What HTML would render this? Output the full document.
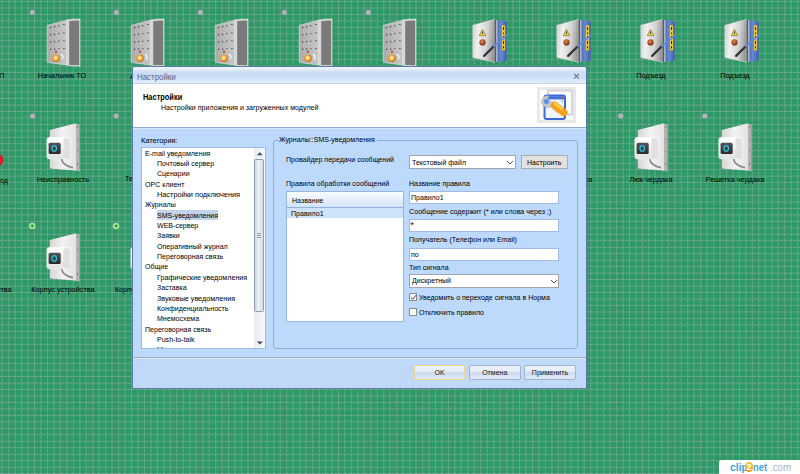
<!DOCTYPE html>
<html><head><meta charset="utf-8">
<style>
html,body{margin:0;padding:0;width:800px;height:474px;overflow:hidden;background:#2d9966;}
body{position:relative;font-family:"Liberation Sans",sans-serif;}
.a{position:absolute;}
.t{position:absolute;font-size:7.05px;line-height:10px;white-space:nowrap;color:#111;}
</style></head><body>
<svg class="a" style="left:0;top:0" width="800" height="474"><g stroke="#c4b8c0" stroke-opacity="0.7" stroke-width="1" stroke-dasharray="0.6467 0.6467"><line x1="2.20" y1="0" x2="2.20" y2="474"/><line x1="8.67" y1="0" x2="8.67" y2="474"/><line x1="15.13" y1="0" x2="15.13" y2="474"/><line x1="21.60" y1="0" x2="21.60" y2="474"/><line x1="28.07" y1="0" x2="28.07" y2="474"/><line x1="34.53" y1="0" x2="34.53" y2="474"/><line x1="41.00" y1="0" x2="41.00" y2="474"/><line x1="47.47" y1="0" x2="47.47" y2="474"/><line x1="53.94" y1="0" x2="53.94" y2="474"/><line x1="60.40" y1="0" x2="60.40" y2="474"/><line x1="66.87" y1="0" x2="66.87" y2="474"/><line x1="73.34" y1="0" x2="73.34" y2="474"/><line x1="79.80" y1="0" x2="79.80" y2="474"/><line x1="86.27" y1="0" x2="86.27" y2="474"/><line x1="92.74" y1="0" x2="92.74" y2="474"/><line x1="99.20" y1="0" x2="99.20" y2="474"/><line x1="105.67" y1="0" x2="105.67" y2="474"/><line x1="112.14" y1="0" x2="112.14" y2="474"/><line x1="118.61" y1="0" x2="118.61" y2="474"/><line x1="125.07" y1="0" x2="125.07" y2="474"/><line x1="131.54" y1="0" x2="131.54" y2="474"/><line x1="138.01" y1="0" x2="138.01" y2="474"/><line x1="144.47" y1="0" x2="144.47" y2="474"/><line x1="150.94" y1="0" x2="150.94" y2="474"/><line x1="157.41" y1="0" x2="157.41" y2="474"/><line x1="163.88" y1="0" x2="163.88" y2="474"/><line x1="170.34" y1="0" x2="170.34" y2="474"/><line x1="176.81" y1="0" x2="176.81" y2="474"/><line x1="183.28" y1="0" x2="183.28" y2="474"/><line x1="189.74" y1="0" x2="189.74" y2="474"/><line x1="196.21" y1="0" x2="196.21" y2="474"/><line x1="202.68" y1="0" x2="202.68" y2="474"/><line x1="209.14" y1="0" x2="209.14" y2="474"/><line x1="215.61" y1="0" x2="215.61" y2="474"/><line x1="222.08" y1="0" x2="222.08" y2="474"/><line x1="228.55" y1="0" x2="228.55" y2="474"/><line x1="235.01" y1="0" x2="235.01" y2="474"/><line x1="241.48" y1="0" x2="241.48" y2="474"/><line x1="247.95" y1="0" x2="247.95" y2="474"/><line x1="254.41" y1="0" x2="254.41" y2="474"/><line x1="260.88" y1="0" x2="260.88" y2="474"/><line x1="267.35" y1="0" x2="267.35" y2="474"/><line x1="273.81" y1="0" x2="273.81" y2="474"/><line x1="280.28" y1="0" x2="280.28" y2="474"/><line x1="286.75" y1="0" x2="286.75" y2="474"/><line x1="293.22" y1="0" x2="293.22" y2="474"/><line x1="299.68" y1="0" x2="299.68" y2="474"/><line x1="306.15" y1="0" x2="306.15" y2="474"/><line x1="312.62" y1="0" x2="312.62" y2="474"/><line x1="319.08" y1="0" x2="319.08" y2="474"/><line x1="325.55" y1="0" x2="325.55" y2="474"/><line x1="332.02" y1="0" x2="332.02" y2="474"/><line x1="338.48" y1="0" x2="338.48" y2="474"/><line x1="344.95" y1="0" x2="344.95" y2="474"/><line x1="351.42" y1="0" x2="351.42" y2="474"/><line x1="357.88" y1="0" x2="357.88" y2="474"/><line x1="364.35" y1="0" x2="364.35" y2="474"/><line x1="370.82" y1="0" x2="370.82" y2="474"/><line x1="377.29" y1="0" x2="377.29" y2="474"/><line x1="383.75" y1="0" x2="383.75" y2="474"/><line x1="390.22" y1="0" x2="390.22" y2="474"/><line x1="396.69" y1="0" x2="396.69" y2="474"/><line x1="403.15" y1="0" x2="403.15" y2="474"/><line x1="409.62" y1="0" x2="409.62" y2="474"/><line x1="416.09" y1="0" x2="416.09" y2="474"/><line x1="422.55" y1="0" x2="422.55" y2="474"/><line x1="429.02" y1="0" x2="429.02" y2="474"/><line x1="435.49" y1="0" x2="435.49" y2="474"/><line x1="441.96" y1="0" x2="441.96" y2="474"/><line x1="448.42" y1="0" x2="448.42" y2="474"/><line x1="454.89" y1="0" x2="454.89" y2="474"/><line x1="461.36" y1="0" x2="461.36" y2="474"/><line x1="467.82" y1="0" x2="467.82" y2="474"/><line x1="474.29" y1="0" x2="474.29" y2="474"/><line x1="480.76" y1="0" x2="480.76" y2="474"/><line x1="487.22" y1="0" x2="487.22" y2="474"/><line x1="493.69" y1="0" x2="493.69" y2="474"/><line x1="500.16" y1="0" x2="500.16" y2="474"/><line x1="506.63" y1="0" x2="506.63" y2="474"/><line x1="513.09" y1="0" x2="513.09" y2="474"/><line x1="519.56" y1="0" x2="519.56" y2="474"/><line x1="526.03" y1="0" x2="526.03" y2="474"/><line x1="532.49" y1="0" x2="532.49" y2="474"/><line x1="538.96" y1="0" x2="538.96" y2="474"/><line x1="545.43" y1="0" x2="545.43" y2="474"/><line x1="551.89" y1="0" x2="551.89" y2="474"/><line x1="558.36" y1="0" x2="558.36" y2="474"/><line x1="564.83" y1="0" x2="564.83" y2="474"/><line x1="571.30" y1="0" x2="571.30" y2="474"/><line x1="577.76" y1="0" x2="577.76" y2="474"/><line x1="584.23" y1="0" x2="584.23" y2="474"/><line x1="590.70" y1="0" x2="590.70" y2="474"/><line x1="597.16" y1="0" x2="597.16" y2="474"/><line x1="603.63" y1="0" x2="603.63" y2="474"/><line x1="610.10" y1="0" x2="610.10" y2="474"/><line x1="616.56" y1="0" x2="616.56" y2="474"/><line x1="623.03" y1="0" x2="623.03" y2="474"/><line x1="629.50" y1="0" x2="629.50" y2="474"/><line x1="635.97" y1="0" x2="635.97" y2="474"/><line x1="642.43" y1="0" x2="642.43" y2="474"/><line x1="648.90" y1="0" x2="648.90" y2="474"/><line x1="655.37" y1="0" x2="655.37" y2="474"/><line x1="661.83" y1="0" x2="661.83" y2="474"/><line x1="668.30" y1="0" x2="668.30" y2="474"/><line x1="674.77" y1="0" x2="674.77" y2="474"/><line x1="681.23" y1="0" x2="681.23" y2="474"/><line x1="687.70" y1="0" x2="687.70" y2="474"/><line x1="694.17" y1="0" x2="694.17" y2="474"/><line x1="700.64" y1="0" x2="700.64" y2="474"/><line x1="707.10" y1="0" x2="707.10" y2="474"/><line x1="713.57" y1="0" x2="713.57" y2="474"/><line x1="720.04" y1="0" x2="720.04" y2="474"/><line x1="726.50" y1="0" x2="726.50" y2="474"/><line x1="732.97" y1="0" x2="732.97" y2="474"/><line x1="739.44" y1="0" x2="739.44" y2="474"/><line x1="745.90" y1="0" x2="745.90" y2="474"/><line x1="752.37" y1="0" x2="752.37" y2="474"/><line x1="758.84" y1="0" x2="758.84" y2="474"/><line x1="765.31" y1="0" x2="765.31" y2="474"/><line x1="771.77" y1="0" x2="771.77" y2="474"/><line x1="778.24" y1="0" x2="778.24" y2="474"/><line x1="784.71" y1="0" x2="784.71" y2="474"/><line x1="791.17" y1="0" x2="791.17" y2="474"/><line x1="797.64" y1="0" x2="797.64" y2="474"/><line x1="0" y1="1.50" x2="800" y2="1.50"/><line x1="0" y1="7.97" x2="800" y2="7.97"/><line x1="0" y1="14.43" x2="800" y2="14.43"/><line x1="0" y1="20.90" x2="800" y2="20.90"/><line x1="0" y1="27.37" x2="800" y2="27.37"/><line x1="0" y1="33.84" x2="800" y2="33.84"/><line x1="0" y1="40.30" x2="800" y2="40.30"/><line x1="0" y1="46.77" x2="800" y2="46.77"/><line x1="0" y1="53.24" x2="800" y2="53.24"/><line x1="0" y1="59.70" x2="800" y2="59.70"/><line x1="0" y1="66.17" x2="800" y2="66.17"/><line x1="0" y1="72.64" x2="800" y2="72.64"/><line x1="0" y1="79.10" x2="800" y2="79.10"/><line x1="0" y1="85.57" x2="800" y2="85.57"/><line x1="0" y1="92.04" x2="800" y2="92.04"/><line x1="0" y1="98.50" x2="800" y2="98.50"/><line x1="0" y1="104.97" x2="800" y2="104.97"/><line x1="0" y1="111.44" x2="800" y2="111.44"/><line x1="0" y1="117.91" x2="800" y2="117.91"/><line x1="0" y1="124.37" x2="800" y2="124.37"/><line x1="0" y1="130.84" x2="800" y2="130.84"/><line x1="0" y1="137.31" x2="800" y2="137.31"/><line x1="0" y1="143.77" x2="800" y2="143.77"/><line x1="0" y1="150.24" x2="800" y2="150.24"/><line x1="0" y1="156.71" x2="800" y2="156.71"/><line x1="0" y1="163.18" x2="800" y2="163.18"/><line x1="0" y1="169.64" x2="800" y2="169.64"/><line x1="0" y1="176.11" x2="800" y2="176.11"/><line x1="0" y1="182.58" x2="800" y2="182.58"/><line x1="0" y1="189.04" x2="800" y2="189.04"/><line x1="0" y1="195.51" x2="800" y2="195.51"/><line x1="0" y1="201.98" x2="800" y2="201.98"/><line x1="0" y1="208.44" x2="800" y2="208.44"/><line x1="0" y1="214.91" x2="800" y2="214.91"/><line x1="0" y1="221.38" x2="800" y2="221.38"/><line x1="0" y1="227.85" x2="800" y2="227.85"/><line x1="0" y1="234.31" x2="800" y2="234.31"/><line x1="0" y1="240.78" x2="800" y2="240.78"/><line x1="0" y1="247.25" x2="800" y2="247.25"/><line x1="0" y1="253.71" x2="800" y2="253.71"/><line x1="0" y1="260.18" x2="800" y2="260.18"/><line x1="0" y1="266.65" x2="800" y2="266.65"/><line x1="0" y1="273.11" x2="800" y2="273.11"/><line x1="0" y1="279.58" x2="800" y2="279.58"/><line x1="0" y1="286.05" x2="800" y2="286.05"/><line x1="0" y1="292.52" x2="800" y2="292.52"/><line x1="0" y1="298.98" x2="800" y2="298.98"/><line x1="0" y1="305.45" x2="800" y2="305.45"/><line x1="0" y1="311.92" x2="800" y2="311.92"/><line x1="0" y1="318.38" x2="800" y2="318.38"/><line x1="0" y1="324.85" x2="800" y2="324.85"/><line x1="0" y1="331.32" x2="800" y2="331.32"/><line x1="0" y1="337.78" x2="800" y2="337.78"/><line x1="0" y1="344.25" x2="800" y2="344.25"/><line x1="0" y1="350.72" x2="800" y2="350.72"/><line x1="0" y1="357.19" x2="800" y2="357.19"/><line x1="0" y1="363.65" x2="800" y2="363.65"/><line x1="0" y1="370.12" x2="800" y2="370.12"/><line x1="0" y1="376.59" x2="800" y2="376.59"/><line x1="0" y1="383.05" x2="800" y2="383.05"/><line x1="0" y1="389.52" x2="800" y2="389.52"/><line x1="0" y1="395.99" x2="800" y2="395.99"/><line x1="0" y1="402.45" x2="800" y2="402.45"/><line x1="0" y1="408.92" x2="800" y2="408.92"/><line x1="0" y1="415.39" x2="800" y2="415.39"/><line x1="0" y1="421.85" x2="800" y2="421.85"/><line x1="0" y1="428.32" x2="800" y2="428.32"/><line x1="0" y1="434.79" x2="800" y2="434.79"/><line x1="0" y1="441.26" x2="800" y2="441.26"/><line x1="0" y1="447.72" x2="800" y2="447.72"/><line x1="0" y1="454.19" x2="800" y2="454.19"/><line x1="0" y1="460.66" x2="800" y2="460.66"/><line x1="0" y1="467.12" x2="800" y2="467.12"/><line x1="0" y1="473.59" x2="800" y2="473.59"/></g></svg>
<svg class="a" style="left:0;top:0" width="800" height="474"><defs>
<linearGradient id="gA" x1="0" y1="0" x2="1" y2="0"><stop offset="0" stop-color="#aaaaaa"/><stop offset="0.5" stop-color="#bababa"/><stop offset="1" stop-color="#c6c6c6"/></linearGradient>
<radialGradient id="gKnob" cx="0.45" cy="0.45" r="0.6"><stop offset="0" stop-color="#fffbe0"/><stop offset="0.35" stop-color="#f8d070"/><stop offset="0.75" stop-color="#e08a18"/><stop offset="1" stop-color="#9a5010"/></radialGradient>
<linearGradient id="gB" x1="0" y1="0" x2="1" y2="0.15"><stop offset="0" stop-color="#cfcfcf"/><stop offset="0.3" stop-color="#f0f0f0"/><stop offset="0.7" stop-color="#d2d2d2"/><stop offset="1" stop-color="#9a9a9a"/></linearGradient>
<linearGradient id="gBlue" x1="0" y1="0" x2="1" y2="0"><stop offset="0" stop-color="#3a58a8"/><stop offset="0.5" stop-color="#6a8ad0"/><stop offset="1" stop-color="#3e5cac"/></linearGradient>
<radialGradient id="gBtn" cx="0.4" cy="0.35" r="0.7"><stop offset="0" stop-color="#d88a58"/><stop offset="0.6" stop-color="#a84a20"/><stop offset="1" stop-color="#6a2a10"/></radialGradient>
<linearGradient id="gC" x1="0" y1="0" x2="1" y2="0"><stop offset="0" stop-color="#d6d6d6"/><stop offset="0.5" stop-color="#f2f2f2"/><stop offset="1" stop-color="#e4e4e4"/></linearGradient>
<linearGradient id="gMod" x1="0" y1="0" x2="0" y2="1"><stop offset="0" stop-color="#ffffff"/><stop offset="1" stop-color="#e2e2e2"/></linearGradient>
<linearGradient id="gDisp" x1="0" y1="0" x2="0" y2="1"><stop offset="0" stop-color="#555"/><stop offset="1" stop-color="#2a2a2a"/></linearGradient>



</defs><g transform="translate(46,17)">
 <path d="M1.2 8.4L20.8 3.2L20.8 48L2.6 45.6Q1.2 45.4 1.2 44Z" fill="url(#gA)" stroke="#dedede" stroke-width="0.7"/>
 <path d="M20.6 3Q27 1.6 34 2L34 49.2Q27 49.2 20.6 48.2Z" fill="#d6d6d6" stroke="#ececec" stroke-width="0.5"/>
 <path d="M23.2 4.2Q28 3.4 33.2 3.6L33.2 48.3L23.2 47.9Z" fill="#7b7b7b"/>
 <g fill="#444">
  <rect x="4" y="10" width="1.2" height="1.3"/><rect x="8" y="9" width="1.2" height="1.3"/><rect x="12.2" y="8" width="1.2" height="1.2"/><rect x="17.2" y="7" width="1.4" height="1"/>
  <rect x="4" y="17.2" width="1.2" height="1.3"/><rect x="8" y="16.6" width="1.2" height="1.3"/><rect x="12.2" y="16" width="1.2" height="1"/><rect x="17.2" y="15.4" width="1.4" height="1"/>
  <rect x="4" y="24.4" width="1.2" height="1.3"/><rect x="8" y="24" width="1.2" height="1.3"/><rect x="12.2" y="23.6" width="1.2" height="1.2"/><rect x="17.2" y="23.2" width="1.4" height="1"/>
  <rect x="4" y="31.6" width="1.2" height="1.3"/><rect x="8" y="31.4" width="1.2" height="1.3"/><rect x="12.2" y="31.2" width="1.2" height="1"/><rect x="17.2" y="31" width="1.4" height="1"/>
 </g>
 <circle cx="10" cy="34.8" r="1" fill="#b83018"/>
 <circle cx="10" cy="41.2" r="3.7" fill="url(#gKnob)"/>
 <path d="M14.8 37.2Q18 38.8 16.2 42.4" fill="none" stroke="#f6f6f6" stroke-width="1.3"/>
</g><g transform="translate(130,17)">
 <path d="M1.2 8.4L20.8 3.2L20.8 48L2.6 45.6Q1.2 45.4 1.2 44Z" fill="url(#gA)" stroke="#dedede" stroke-width="0.7"/>
 <path d="M20.6 3Q27 1.6 34 2L34 49.2Q27 49.2 20.6 48.2Z" fill="#d6d6d6" stroke="#ececec" stroke-width="0.5"/>
 <path d="M23.2 4.2Q28 3.4 33.2 3.6L33.2 48.3L23.2 47.9Z" fill="#7b7b7b"/>
 <g fill="#444">
  <rect x="4" y="10" width="1.2" height="1.3"/><rect x="8" y="9" width="1.2" height="1.3"/><rect x="12.2" y="8" width="1.2" height="1.2"/><rect x="17.2" y="7" width="1.4" height="1"/>
  <rect x="4" y="17.2" width="1.2" height="1.3"/><rect x="8" y="16.6" width="1.2" height="1.3"/><rect x="12.2" y="16" width="1.2" height="1"/><rect x="17.2" y="15.4" width="1.4" height="1"/>
  <rect x="4" y="24.4" width="1.2" height="1.3"/><rect x="8" y="24" width="1.2" height="1.3"/><rect x="12.2" y="23.6" width="1.2" height="1.2"/><rect x="17.2" y="23.2" width="1.4" height="1"/>
  <rect x="4" y="31.6" width="1.2" height="1.3"/><rect x="8" y="31.4" width="1.2" height="1.3"/><rect x="12.2" y="31.2" width="1.2" height="1"/><rect x="17.2" y="31" width="1.4" height="1"/>
 </g>
 <circle cx="10" cy="34.8" r="1" fill="#b83018"/>
 <circle cx="10" cy="41.2" r="3.7" fill="url(#gKnob)"/>
 <path d="M14.8 37.2Q18 38.8 16.2 42.4" fill="none" stroke="#f6f6f6" stroke-width="1.3"/>
</g><g transform="translate(214,17)">
 <path d="M1.2 8.4L20.8 3.2L20.8 48L2.6 45.6Q1.2 45.4 1.2 44Z" fill="url(#gA)" stroke="#dedede" stroke-width="0.7"/>
 <path d="M20.6 3Q27 1.6 34 2L34 49.2Q27 49.2 20.6 48.2Z" fill="#d6d6d6" stroke="#ececec" stroke-width="0.5"/>
 <path d="M23.2 4.2Q28 3.4 33.2 3.6L33.2 48.3L23.2 47.9Z" fill="#7b7b7b"/>
 <g fill="#444">
  <rect x="4" y="10" width="1.2" height="1.3"/><rect x="8" y="9" width="1.2" height="1.3"/><rect x="12.2" y="8" width="1.2" height="1.2"/><rect x="17.2" y="7" width="1.4" height="1"/>
  <rect x="4" y="17.2" width="1.2" height="1.3"/><rect x="8" y="16.6" width="1.2" height="1.3"/><rect x="12.2" y="16" width="1.2" height="1"/><rect x="17.2" y="15.4" width="1.4" height="1"/>
  <rect x="4" y="24.4" width="1.2" height="1.3"/><rect x="8" y="24" width="1.2" height="1.3"/><rect x="12.2" y="23.6" width="1.2" height="1.2"/><rect x="17.2" y="23.2" width="1.4" height="1"/>
  <rect x="4" y="31.6" width="1.2" height="1.3"/><rect x="8" y="31.4" width="1.2" height="1.3"/><rect x="12.2" y="31.2" width="1.2" height="1"/><rect x="17.2" y="31" width="1.4" height="1"/>
 </g>
 <circle cx="10" cy="34.8" r="1" fill="#b83018"/>
 <circle cx="10" cy="41.2" r="3.7" fill="url(#gKnob)"/>
 <path d="M14.8 37.2Q18 38.8 16.2 42.4" fill="none" stroke="#f6f6f6" stroke-width="1.3"/>
</g><g transform="translate(298,17)">
 <path d="M1.2 8.4L20.8 3.2L20.8 48L2.6 45.6Q1.2 45.4 1.2 44Z" fill="url(#gA)" stroke="#dedede" stroke-width="0.7"/>
 <path d="M20.6 3Q27 1.6 34 2L34 49.2Q27 49.2 20.6 48.2Z" fill="#d6d6d6" stroke="#ececec" stroke-width="0.5"/>
 <path d="M23.2 4.2Q28 3.4 33.2 3.6L33.2 48.3L23.2 47.9Z" fill="#7b7b7b"/>
 <g fill="#444">
  <rect x="4" y="10" width="1.2" height="1.3"/><rect x="8" y="9" width="1.2" height="1.3"/><rect x="12.2" y="8" width="1.2" height="1.2"/><rect x="17.2" y="7" width="1.4" height="1"/>
  <rect x="4" y="17.2" width="1.2" height="1.3"/><rect x="8" y="16.6" width="1.2" height="1.3"/><rect x="12.2" y="16" width="1.2" height="1"/><rect x="17.2" y="15.4" width="1.4" height="1"/>
  <rect x="4" y="24.4" width="1.2" height="1.3"/><rect x="8" y="24" width="1.2" height="1.3"/><rect x="12.2" y="23.6" width="1.2" height="1.2"/><rect x="17.2" y="23.2" width="1.4" height="1"/>
  <rect x="4" y="31.6" width="1.2" height="1.3"/><rect x="8" y="31.4" width="1.2" height="1.3"/><rect x="12.2" y="31.2" width="1.2" height="1"/><rect x="17.2" y="31" width="1.4" height="1"/>
 </g>
 <circle cx="10" cy="34.8" r="1" fill="#b83018"/>
 <circle cx="10" cy="41.2" r="3.7" fill="url(#gKnob)"/>
 <path d="M14.8 37.2Q18 38.8 16.2 42.4" fill="none" stroke="#f6f6f6" stroke-width="1.3"/>
</g><g transform="translate(382,17)">
 <path d="M1.2 8.4L20.8 3.2L20.8 48L2.6 45.6Q1.2 45.4 1.2 44Z" fill="url(#gA)" stroke="#dedede" stroke-width="0.7"/>
 <path d="M20.6 3Q27 1.6 34 2L34 49.2Q27 49.2 20.6 48.2Z" fill="#d6d6d6" stroke="#ececec" stroke-width="0.5"/>
 <path d="M23.2 4.2Q28 3.4 33.2 3.6L33.2 48.3L23.2 47.9Z" fill="#7b7b7b"/>
 <g fill="#444">
  <rect x="4" y="10" width="1.2" height="1.3"/><rect x="8" y="9" width="1.2" height="1.3"/><rect x="12.2" y="8" width="1.2" height="1.2"/><rect x="17.2" y="7" width="1.4" height="1"/>
  <rect x="4" y="17.2" width="1.2" height="1.3"/><rect x="8" y="16.6" width="1.2" height="1.3"/><rect x="12.2" y="16" width="1.2" height="1"/><rect x="17.2" y="15.4" width="1.4" height="1"/>
  <rect x="4" y="24.4" width="1.2" height="1.3"/><rect x="8" y="24" width="1.2" height="1.3"/><rect x="12.2" y="23.6" width="1.2" height="1.2"/><rect x="17.2" y="23.2" width="1.4" height="1"/>
  <rect x="4" y="31.6" width="1.2" height="1.3"/><rect x="8" y="31.4" width="1.2" height="1.3"/><rect x="12.2" y="31.2" width="1.2" height="1"/><rect x="17.2" y="31" width="1.4" height="1"/>
 </g>
 <circle cx="10" cy="34.8" r="1" fill="#b83018"/>
 <circle cx="10" cy="41.2" r="3.7" fill="url(#gKnob)"/>
 <path d="M14.8 37.2Q18 38.8 16.2 42.4" fill="none" stroke="#f6f6f6" stroke-width="1.3"/>
</g><g transform="translate(471,17)">
 <path d="M1.8 8.2L23.9 2.3L23.9 45.3L1.8 40.5Z" fill="url(#gB)" stroke="#e6e6e6" stroke-width="0.5"/>
 <path d="M24.2 2.4L35.7 4.5L35.7 43.5L24.2 45.3Z" fill="url(#gBlue)"/>
 <rect x="23.6" y="2.6" width="1.4" height="42.6" fill="#5a5a5a"/>
 <rect x="25" y="3" width="1.6" height="42" fill="#aab4c8"/>
 <rect x="30.9" y="8.2" width="3.2" height="25.3" rx="0.8" fill="#e6c63a"/>
 <g fill="#2a2a2a"><rect x="32" y="10" width="1" height="3"/><rect x="32" y="15.5" width="1" height="1.6"/><rect x="32" y="19" width="1" height="1.2"/><rect x="32" y="24" width="1" height="3"/><rect x="32" y="29" width="1" height="2.5"/></g>
 <path d="M11.5 12.5L14.9 18.7L8.1 18.7Z" fill="#f0d040" stroke="#6a5a20" stroke-width="0.55"/>
 <rect x="11.1" y="14.6" width="0.8" height="2.4" fill="#333"/>
 <circle cx="11.5" cy="25.4" r="3.1" fill="url(#gBtn)"/>
 <path d="M13.1 38.9L22.8 29.2" stroke="#303438" stroke-width="2.3" stroke-linecap="round"/>
 <path d="M22.8 29.2L35.7 18.4" stroke="#5c8ae0" stroke-width="1.9" stroke-linecap="round"/>
</g><g transform="translate(555,17)">
 <path d="M1.8 8.2L23.9 2.3L23.9 45.3L1.8 40.5Z" fill="url(#gB)" stroke="#e6e6e6" stroke-width="0.5"/>
 <path d="M24.2 2.4L35.7 4.5L35.7 43.5L24.2 45.3Z" fill="url(#gBlue)"/>
 <rect x="23.6" y="2.6" width="1.4" height="42.6" fill="#5a5a5a"/>
 <rect x="25" y="3" width="1.6" height="42" fill="#aab4c8"/>
 <rect x="30.9" y="8.2" width="3.2" height="25.3" rx="0.8" fill="#e6c63a"/>
 <g fill="#2a2a2a"><rect x="32" y="10" width="1" height="3"/><rect x="32" y="15.5" width="1" height="1.6"/><rect x="32" y="19" width="1" height="1.2"/><rect x="32" y="24" width="1" height="3"/><rect x="32" y="29" width="1" height="2.5"/></g>
 <path d="M11.5 12.5L14.9 18.7L8.1 18.7Z" fill="#f0d040" stroke="#6a5a20" stroke-width="0.55"/>
 <rect x="11.1" y="14.6" width="0.8" height="2.4" fill="#333"/>
 <circle cx="11.5" cy="25.4" r="3.1" fill="url(#gBtn)"/>
 <path d="M13.1 38.9L22.8 29.2" stroke="#303438" stroke-width="2.3" stroke-linecap="round"/>
 <path d="M22.8 29.2L35.7 18.4" stroke="#5c8ae0" stroke-width="1.9" stroke-linecap="round"/>
</g><g transform="translate(639,17)">
 <path d="M1.8 8.2L23.9 2.3L23.9 45.3L1.8 40.5Z" fill="url(#gB)" stroke="#e6e6e6" stroke-width="0.5"/>
 <path d="M24.2 2.4L35.7 4.5L35.7 43.5L24.2 45.3Z" fill="url(#gBlue)"/>
 <rect x="23.6" y="2.6" width="1.4" height="42.6" fill="#5a5a5a"/>
 <rect x="25" y="3" width="1.6" height="42" fill="#aab4c8"/>
 <rect x="30.9" y="8.2" width="3.2" height="25.3" rx="0.8" fill="#e6c63a"/>
 <g fill="#2a2a2a"><rect x="32" y="10" width="1" height="3"/><rect x="32" y="15.5" width="1" height="1.6"/><rect x="32" y="19" width="1" height="1.2"/><rect x="32" y="24" width="1" height="3"/><rect x="32" y="29" width="1" height="2.5"/></g>
 <path d="M11.5 12.5L14.9 18.7L8.1 18.7Z" fill="#f0d040" stroke="#6a5a20" stroke-width="0.55"/>
 <rect x="11.1" y="14.6" width="0.8" height="2.4" fill="#333"/>
 <circle cx="11.5" cy="25.4" r="3.1" fill="url(#gBtn)"/>
 <path d="M13.1 38.9L22.8 29.2" stroke="#303438" stroke-width="2.3" stroke-linecap="round"/>
 <path d="M22.8 29.2L35.7 18.4" stroke="#5c8ae0" stroke-width="1.9" stroke-linecap="round"/>
</g><g transform="translate(723,17)">
 <path d="M1.8 8.2L23.9 2.3L23.9 45.3L1.8 40.5Z" fill="url(#gB)" stroke="#e6e6e6" stroke-width="0.5"/>
 <path d="M24.2 2.4L35.7 4.5L35.7 43.5L24.2 45.3Z" fill="url(#gBlue)"/>
 <rect x="23.6" y="2.6" width="1.4" height="42.6" fill="#5a5a5a"/>
 <rect x="25" y="3" width="1.6" height="42" fill="#aab4c8"/>
 <rect x="30.9" y="8.2" width="3.2" height="25.3" rx="0.8" fill="#e6c63a"/>
 <g fill="#2a2a2a"><rect x="32" y="10" width="1" height="3"/><rect x="32" y="15.5" width="1" height="1.6"/><rect x="32" y="19" width="1" height="1.2"/><rect x="32" y="24" width="1" height="3"/><rect x="32" y="29" width="1" height="2.5"/></g>
 <path d="M11.5 12.5L14.9 18.7L8.1 18.7Z" fill="#f0d040" stroke="#6a5a20" stroke-width="0.55"/>
 <rect x="11.1" y="14.6" width="0.8" height="2.4" fill="#333"/>
 <circle cx="11.5" cy="25.4" r="3.1" fill="url(#gBtn)"/>
 <path d="M13.1 38.9L22.8 29.2" stroke="#303438" stroke-width="2.3" stroke-linecap="round"/>
 <path d="M22.8 29.2L35.7 18.4" stroke="#5c8ae0" stroke-width="1.9" stroke-linecap="round"/>
</g><g transform="translate(46,121)">
 <path d="M3.8 9L29.1 2.4L29.1 49.5L3.8 47.5Z" fill="url(#gC)"/>
 <path d="M29.1 2.4L33.6 3.4L33.6 50.6L29.1 49.5Z" fill="#b2b2b2"/><rect x="29" y="2.6" width="1.1" height="47" fill="#e2e2e2"/>
 <g fill="#606060"><circle cx="31.6" cy="6" r="0.65"/><circle cx="31.6" cy="18" r="0.55"/><circle cx="31.6" cy="30" r="0.55"/><circle cx="31.6" cy="43" r="0.65"/></g>
 <rect x="0.8" y="16.3" width="24.1" height="21.6" rx="2.5" fill="url(#gMod)" stroke="#f6f6f6" stroke-width="0.5"/>
 <rect x="17.5" y="17.2" width="6.6" height="20" rx="1.5" fill="#e0e0e0"/>
 <rect x="2.6" y="21.7" width="12.1" height="11.4" rx="1.6" fill="url(#gDisp)"/>
 <ellipse cx="8.2" cy="27.4" rx="2.3" ry="2.8" fill="none" stroke="#2ec0e6" stroke-width="1.2"/>
 <path d="M15.6 38.2Q17 44.5 27 46.6" fill="none" stroke="#8a8a8a" stroke-width="1.7"/>
</g><g transform="translate(634,121)">
 <path d="M3.8 9L29.1 2.4L29.1 49.5L3.8 47.5Z" fill="url(#gC)"/>
 <path d="M29.1 2.4L33.6 3.4L33.6 50.6L29.1 49.5Z" fill="#b2b2b2"/><rect x="29" y="2.6" width="1.1" height="47" fill="#e2e2e2"/>
 <g fill="#606060"><circle cx="31.6" cy="6" r="0.65"/><circle cx="31.6" cy="18" r="0.55"/><circle cx="31.6" cy="30" r="0.55"/><circle cx="31.6" cy="43" r="0.65"/></g>
 <rect x="0.8" y="16.3" width="24.1" height="21.6" rx="2.5" fill="url(#gMod)" stroke="#f6f6f6" stroke-width="0.5"/>
 <rect x="17.5" y="17.2" width="6.6" height="20" rx="1.5" fill="#e0e0e0"/>
 <rect x="2.6" y="21.7" width="12.1" height="11.4" rx="1.6" fill="url(#gDisp)"/>
 <ellipse cx="8.2" cy="27.4" rx="2.3" ry="2.8" fill="none" stroke="#2ec0e6" stroke-width="1.2"/>
 <path d="M15.6 38.2Q17 44.5 27 46.6" fill="none" stroke="#8a8a8a" stroke-width="1.7"/>
</g><g transform="translate(718,121)">
 <path d="M3.8 9L29.1 2.4L29.1 49.5L3.8 47.5Z" fill="url(#gC)"/>
 <path d="M29.1 2.4L33.6 3.4L33.6 50.6L29.1 49.5Z" fill="#b2b2b2"/><rect x="29" y="2.6" width="1.1" height="47" fill="#e2e2e2"/>
 <g fill="#606060"><circle cx="31.6" cy="6" r="0.65"/><circle cx="31.6" cy="18" r="0.55"/><circle cx="31.6" cy="30" r="0.55"/><circle cx="31.6" cy="43" r="0.65"/></g>
 <rect x="0.8" y="16.3" width="24.1" height="21.6" rx="2.5" fill="url(#gMod)" stroke="#f6f6f6" stroke-width="0.5"/>
 <rect x="17.5" y="17.2" width="6.6" height="20" rx="1.5" fill="#e0e0e0"/>
 <rect x="2.6" y="21.7" width="12.1" height="11.4" rx="1.6" fill="url(#gDisp)"/>
 <ellipse cx="8.2" cy="27.4" rx="2.3" ry="2.8" fill="none" stroke="#2ec0e6" stroke-width="1.2"/>
 <path d="M15.6 38.2Q17 44.5 27 46.6" fill="none" stroke="#8a8a8a" stroke-width="1.7"/>
</g><g transform="translate(46,231)">
 <path d="M3.8 9L29.1 2.4L29.1 49.5L3.8 47.5Z" fill="url(#gC)"/>
 <path d="M29.1 2.4L33.6 3.4L33.6 50.6L29.1 49.5Z" fill="#b2b2b2"/><rect x="29" y="2.6" width="1.1" height="47" fill="#e2e2e2"/>
 <g fill="#606060"><circle cx="31.6" cy="6" r="0.65"/><circle cx="31.6" cy="18" r="0.55"/><circle cx="31.6" cy="30" r="0.55"/><circle cx="31.6" cy="43" r="0.65"/></g>
 <rect x="0.8" y="16.3" width="24.1" height="21.6" rx="2.5" fill="url(#gMod)" stroke="#f6f6f6" stroke-width="0.5"/>
 <rect x="17.5" y="17.2" width="6.6" height="20" rx="1.5" fill="#e0e0e0"/>
 <rect x="2.6" y="21.7" width="12.1" height="11.4" rx="1.6" fill="url(#gDisp)"/>
 <ellipse cx="8.2" cy="27.4" rx="2.3" ry="2.8" fill="none" stroke="#2ec0e6" stroke-width="1.2"/>
 <path d="M15.6 38.2Q17 44.5 27 46.6" fill="none" stroke="#8a8a8a" stroke-width="1.7"/>
</g><g transform="translate(130,231)">
 <path d="M3.8 9L29.1 2.4L29.1 49.5L3.8 47.5Z" fill="url(#gC)"/>
 <path d="M29.1 2.4L33.6 3.4L33.6 50.6L29.1 49.5Z" fill="#b2b2b2"/><rect x="29" y="2.6" width="1.1" height="47" fill="#e2e2e2"/>
 <g fill="#606060"><circle cx="31.6" cy="6" r="0.65"/><circle cx="31.6" cy="18" r="0.55"/><circle cx="31.6" cy="30" r="0.55"/><circle cx="31.6" cy="43" r="0.65"/></g>
 <rect x="0.8" y="16.3" width="24.1" height="21.6" rx="2.5" fill="url(#gMod)" stroke="#f6f6f6" stroke-width="0.5"/>
 <rect x="17.5" y="17.2" width="6.6" height="20" rx="1.5" fill="#e0e0e0"/>
 <rect x="2.6" y="21.7" width="12.1" height="11.4" rx="1.6" fill="url(#gDisp)"/>
 <ellipse cx="8.2" cy="27.4" rx="2.3" ry="2.8" fill="none" stroke="#2ec0e6" stroke-width="1.2"/>
 <path d="M15.6 38.2Q17 44.5 27 46.6" fill="none" stroke="#8a8a8a" stroke-width="1.7"/>
</g><rect x="29.9" y="9.9" width="5" height="5" rx="2" fill="#b4b1b6"/><rect x="113.9" y="9.9" width="5" height="5" rx="2" fill="#b4b1b6"/><rect x="197.9" y="9.9" width="5" height="5" rx="2" fill="#b4b1b6"/><rect x="281.9" y="9.9" width="5" height="5" rx="2" fill="#b4b1b6"/><rect x="365.9" y="9.9" width="5" height="5" rx="2" fill="#b4b1b6"/><rect x="30.300000000000004" y="113.4" width="5" height="5" rx="2" fill="#b4b1b6"/><rect x="113.7" y="113.4" width="5" height="5" rx="2" fill="#b4b1b6"/><rect x="618.2" y="113.4" width="5" height="5" rx="2" fill="#b4b1b6"/><rect x="702.4000000000001" y="113.4" width="5" height="5" rx="2" fill="#b4b1b6"/><circle cx="32.3" cy="225.9" r="2.3" fill="#4a7a5a" stroke="#9aec8c" stroke-width="1.9"/><circle cx="116.1" cy="225.9" r="2.3" fill="#4a7a5a" stroke="#9aec8c" stroke-width="1.9"/><circle cx="-3" cy="160" r="6.5" fill="#d4202c"/></svg>
<div class="t" style="left:2.200000000000003px;top:71.20px;width:120px;text-align:center;font-size:7.6px;transform:scaleX(0.965);color:#000">Начальник ТО</div>
<div class="t" style="left:591px;top:71.20px;width:120px;text-align:center;font-size:7.6px;transform:scaleX(0.965);color:#000">Подъезд</div>
<div class="t" style="left:675px;top:71.20px;width:120px;text-align:center;font-size:7.6px;transform:scaleX(0.965);color:#000">Подъезд</div>
<div class="t" style="left:2.799999999999997px;top:175.00px;width:120px;text-align:center;font-size:7.6px;transform:scaleX(0.965);color:#000">Неисправность</div>
<div class="t" style="left:591px;top:175.20px;width:120px;text-align:center;font-size:7.6px;transform:scaleX(0.965);color:#000">Люк чердака</div>
<div class="t" style="left:675px;top:175.20px;width:120px;text-align:center;font-size:7.6px;transform:scaleX(0.965);color:#000">Решетка чердака</div>
<div class="t" style="left:2.75px;top:285.00px;width:120px;text-align:center;font-size:7.6px;transform:scaleX(0.965);color:#000">Корпус устройства</div>
<div class="t" style="left:-5.5px;top:71.00px;font-size:7.90px;color:#000;font-weight:400;transform:scaleX(0.8929);transform-origin:0 0;">ТП</div>
<div class="t" style="left:-8px;top:175.50px;font-size:7.90px;color:#000;font-weight:400;transform:scaleX(0.8929);transform-origin:0 0;">Вход</div>
<div class="t" style="left:-25.5px;top:285.30px;font-size:7.90px;color:#000;font-weight:400;transform:scaleX(0.8929);transform-origin:0 0;">устройства</div>
<div class="t" style="left:125px;top:174.00px;font-size:7.90px;color:#000;font-weight:400;transform:scaleX(0.8929);transform-origin:0 0;">Тест</div>
<div class="t" style="left:115.3px;top:284.80px;font-size:7.90px;color:#000;font-weight:400;transform:scaleX(0.8929);transform-origin:0 0;">Корпус</div>
<div class="t" style="left:585.2px;top:175.30px;font-size:7.90px;color:#000;font-weight:400;transform:scaleX(0.8929);transform-origin:0 0;">ка</div>
<div class="t" style="left:130.4px;top:72.10px;font-size:7.90px;color:#000;font-weight:400;transform:scaleX(0.8929);transform-origin:0 0;">А</div>
<div class="a" style="left:132px;top:66px;width:455.00px;height:322.50px;box-sizing:border-box;border:1px solid #5b7aa3;border-radius:3px 3px 0 0;background:#bdd9fc;"></div>
<div class="a" style="left:133px;top:67px;width:453.00px;height:16.00px;border-radius:2px 2px 0 0;background:linear-gradient(#eef5fd 0,#e2ecf9 16%,#cddef4 32%,#c9dbf3 62%,#dae7f8 80%,#e2edfa 100%);"></div>
<div class="a" style="left:133px;top:83px;width:453.00px;height:1.00px;background:#b9d4f3;"></div>
<div class="a" style="left:133px;top:84px;width:453.00px;height:43.00px;background:#fff;"></div>
<div class="a" style="left:133px;top:127px;width:453.00px;height:1.00px;background:#8fa9d2;"></div>
<div class="a" style="left:133px;top:128px;width:453.00px;height:1.00px;background:#d8e7fb;"></div>
<div class="t" style="left:136.6px;top:72.10px;font-size:8.85px;color:#5e6180;font-weight:400;transform:scaleX(0.8929);transform-origin:0 0;">Настройки</div>
<svg class="a" style="left:573.2px;top:72.6px" width="7" height="7"><path d="M1.2 1L5.8 5.6M5.8 1L1.2 5.6" stroke="#6c7a92" stroke-width="1.15"/></svg>
<div class="t" style="left:143.25px;top:92.25px;font-size:8.34px;color:#000;font-weight:700;transform:scaleX(0.8929);transform-origin:0 0;">Настройки</div>
<div class="t" style="left:160.75px;top:103.00px;font-size:7.95px;color:#000;font-weight:400;transform:scaleX(0.8929);transform-origin:0 0;">Настройки приложения и загруженных модулей</div>
<div class="a" style="left:537.1px;top:87.1px;width:39.00px;height:36.30px;box-sizing:border-box;border:3.5px solid #e9e9e9;background:#fff;"></div>
<svg class="a" style="left:534px;top:84px" width="46" height="42">
<rect x="14.2" y="6.6" width="23.9" height="24" fill="none" stroke="#d9d9d9" stroke-width="2.4"/>
<rect x="10.5" y="11.5" width="20.5" height="23.5" rx="2" fill="#eef5ff" stroke="#3a6ad8" stroke-width="2"/>
<rect x="11.2" y="12.2" width="19.2" height="3.2" fill="#4274de"/>
<circle cx="28.6" cy="13.8" r="0.9" fill="#e84a3a"/><circle cx="28.2" cy="17.2" r="0.8" fill="#4ab84a"/>
<path d="M13.4 17.6L24 27" stroke="#b4b4b4" stroke-width="3.6" stroke-linecap="round"/>
<path d="M13.4 11.6a6 6 0 1 0 6 6.2l-3.2-0.2l-2.2-2.6l0.6-3.2z" fill="#c6c6c6" stroke="#a0a0a0" stroke-width="0.4"/>
<circle cx="12.4" cy="17.6" r="2.5" fill="#5d8fe8"/>
<g transform="rotate(37 25.2 25)"><rect x="15.7" y="21.2" width="19" height="7.6" rx="3.8" fill="#f4a21e"/><rect x="17.5" y="22" width="11" height="2.6" rx="1.3" fill="#fccf48"/></g>
</svg>
<div class="t" style="left:141.1px;top:135.90px;font-size:7.90px;color:#000;font-weight:400;transform:scaleX(0.9375);transform-origin:0 0;">Категория:</div>
<div class="a" style="left:141.2px;top:146.8px;width:125.10px;height:202.50px;box-sizing:border-box;border:1px solid #9dbce5;background:#fff;"></div>
<div class="a" style="left:156.8px;top:210.2px;width:61.20px;height:10.30px;background:#c3d3ec;"></div>
<div class="t" style="left:145.2px;top:148.50px;font-size:7.90px;color:#000;font-weight:400;transform:scaleX(0.8929);transform-origin:0 0;">E-mail уведомления</div>
<div class="t" style="left:157.4px;top:158.86px;font-size:7.90px;color:#000;font-weight:400;transform:scaleX(0.8929);transform-origin:0 0;">Почтовый сервер</div>
<div class="t" style="left:157.4px;top:169.22px;font-size:7.90px;color:#000;font-weight:400;transform:scaleX(0.8929);transform-origin:0 0;">Сценарии</div>
<div class="t" style="left:145.2px;top:179.58px;font-size:7.90px;color:#000;font-weight:400;transform:scaleX(0.8929);transform-origin:0 0;">OPC клиент</div>
<div class="t" style="left:157.4px;top:189.94px;font-size:7.90px;color:#000;font-weight:400;transform:scaleX(0.9286);transform-origin:0 0;">Настройки подключения</div>
<div class="t" style="left:145.2px;top:200.30px;font-size:7.90px;color:#000;font-weight:400;transform:scaleX(0.8929);transform-origin:0 0;">Журналы</div>
<div class="t" style="left:157.4px;top:210.66px;font-size:7.90px;color:#000;font-weight:400;transform:scaleX(0.8929);transform-origin:0 0;">SMS-уведомления</div>
<div class="t" style="left:157.4px;top:221.02px;font-size:7.90px;color:#000;font-weight:400;transform:scaleX(0.8929);transform-origin:0 0;">WEB-сервер</div>
<div class="t" style="left:157.4px;top:231.38px;font-size:7.90px;color:#000;font-weight:400;transform:scaleX(0.8929);transform-origin:0 0;">Заявки</div>
<div class="t" style="left:157.4px;top:241.74px;font-size:7.90px;color:#000;font-weight:400;transform:scaleX(0.8929);transform-origin:0 0;">Оперативный журнал</div>
<div class="t" style="left:157.4px;top:252.10px;font-size:7.90px;color:#000;font-weight:400;transform:scaleX(0.8929);transform-origin:0 0;">Переговорная связь</div>
<div class="t" style="left:145.2px;top:262.46px;font-size:7.90px;color:#000;font-weight:400;transform:scaleX(0.8929);transform-origin:0 0;">Общие</div>
<div class="t" style="left:157.4px;top:272.82px;font-size:7.90px;color:#000;font-weight:400;transform:scaleX(0.9107);transform-origin:0 0;">Графические уведомления</div>
<div class="t" style="left:157.4px;top:283.18px;font-size:7.90px;color:#000;font-weight:400;transform:scaleX(0.8929);transform-origin:0 0;">Заставка</div>
<div class="t" style="left:157.4px;top:293.54px;font-size:7.90px;color:#000;font-weight:400;transform:scaleX(0.9107);transform-origin:0 0;">Звуковые уведомления</div>
<div class="t" style="left:157.4px;top:303.90px;font-size:7.90px;color:#000;font-weight:400;transform:scaleX(0.8929);transform-origin:0 0;">Конфиденциальность</div>
<div class="t" style="left:157.4px;top:314.26px;font-size:7.90px;color:#000;font-weight:400;transform:scaleX(0.8929);transform-origin:0 0;">Мнемосхема</div>
<div class="t" style="left:145.2px;top:324.62px;font-size:7.90px;color:#000;font-weight:400;transform:scaleX(0.8929);transform-origin:0 0;">Переговорная связь</div>
<div class="t" style="left:157.4px;top:334.98px;font-size:7.90px;color:#000;font-weight:400;transform:scaleX(0.8929);transform-origin:0 0;">Push-to-talk</div>
<div class="t" style="left:157.4px;top:345.34px;font-size:7.90px;color:#000;font-weight:400;transform:scaleX(0.8929);transform-origin:0 0;">Мнемосхема</div>
<div class="a" style="left:141.2px;top:348.3px;width:125.10px;height:8.70px;background:#bdd9fc;border-top:1px solid #9dbce5;"></div>
<div class="a" style="left:253.6px;top:147.8px;width:11.70px;height:200.50px;background:linear-gradient(90deg,#e9edf3,#f5f7fa);"></div>
<div class="a" style="left:254.3px;top:159.2px;width:10.00px;height:152.80px;box-sizing:border-box;border:1px solid #8e9cb4;border-radius:1.5px;background:linear-gradient(90deg,#c8d3e2,#eef2f8 45%,#d0dae8);"></div>
<svg class="a" style="left:256px;top:232px" width="8" height="8"><path d="M1 1.5H5M1 3.5H5M1 5.5H5" stroke="#8a8f9a" stroke-width="0.9"/></svg>
<svg class="a" style="left:255px;top:150px" width="10" height="7"><path d="M1.8 5.3L4.8 2.2L7.8 5.3Z" fill="#3b4a66"/></svg>
<svg class="a" style="left:255px;top:339.5px" width="10" height="7"><path d="M1.8 1.5L4.8 4.6L7.8 1.5Z" fill="#3b4a66"/></svg>
<div class="a" style="left:273.3px;top:139.6px;width:304.30px;height:209.00px;box-sizing:border-box;border:1px solid #8fb0df;border-radius:3px;"></div>
<div class="a" style="left:278px;top:135px;width:99.00px;height:9.00px;background:#bdd9fc;"></div>
<div class="t" style="left:278.7px;top:135.10px;font-size:7.90px;color:#000;font-weight:400;transform:scaleX(0.8929);transform-origin:0 0;">Журналы::SMS-уведомления</div>
<div class="t" style="left:285.7px;top:155.30px;font-size:7.90px;color:#000;font-weight:400;transform:scaleX(0.8929);transform-origin:0 0;">Провайдер передачи сообщений</div>
<div class="t" style="left:285.7px;top:178.50px;font-size:7.90px;color:#000;font-weight:400;transform:scaleX(0.8929);transform-origin:0 0;">Правила обработки сообщений</div>
<div class="a" style="left:286px;top:191.2px;width:118.40px;height:131.20px;box-sizing:border-box;border:1px solid #98b6de;background:#fff;"></div>
<div class="a" style="left:287px;top:192.2px;width:116.40px;height:14.60px;background:linear-gradient(#fafcff,#e9f1fb 45%,#d3e3f7);border-bottom:1px solid #93b2dc;"></div>
<div class="t" style="left:292.4px;top:195.50px;font-size:7.90px;color:#000;font-weight:400;transform:scaleX(0.8929);transform-origin:0 0;">Название</div>
<div class="a" style="left:287px;top:207.8px;width:116.40px;height:10.60px;background:#cde4fb;"></div>
<div class="t" style="left:290.7px;top:208.70px;font-size:7.90px;color:#000;font-weight:400;transform:scaleX(0.8929);transform-origin:0 0;">Правило1</div>
<div class="a" style="left:408.8px;top:155px;width:106.90px;height:14.20px;box-sizing:border-box;border:1px solid #a2a4a8;border-radius:0.5px;background:#fff;"></div>
<div class="t" style="left:411.9px;top:157.50px;font-size:7.90px;color:#000;font-weight:400;transform:scaleX(0.8929);transform-origin:0 0;">Текстовый файл</div>
<svg class="a" style="left:505.5px;top:160px" width="8" height="5"><path d="M1 1L4 4L7 1" fill="none" stroke="#444" stroke-width="0.9"/></svg>
<div class="a" style="left:520.7px;top:154.5px;width:47.00px;height:14.70px;box-sizing:border-box;border:1px solid #adadad;border-radius:0.5px;background:#e1e1e1;"></div>
<div class="t" style="left:526.5px;top:157.50px;font-size:7.90px;color:#000;font-weight:400;transform:scaleX(0.8929);transform-origin:0 0;">Настроить</div>
<div class="t" style="left:408.5px;top:178.50px;font-size:7.90px;color:#000;font-weight:400;transform:scaleX(0.8929);transform-origin:0 0;">Название правила</div>
<div class="a" style="left:408.8px;top:190.9px;width:150.50px;height:12.80px;box-sizing:border-box;border:1px solid #9fbde4;background:#fff;"></div>
<div class="t" style="left:410.5px;top:193.30px;font-size:7.90px;color:#000;font-weight:400;transform:scaleX(0.8929);transform-origin:0 0;">Правило1</div>
<div class="t" style="left:408.5px;top:207.00px;font-size:7.90px;color:#000;font-weight:400;transform:scaleX(0.9062);transform-origin:0 0;">Сообщение содержит (* или слова через ;)</div>
<div class="a" style="left:408.8px;top:219.2px;width:150.50px;height:13.10px;box-sizing:border-box;border:1px solid #9fbde4;background:#fff;"></div>
<div class="a" style="left:410.2px;top:219.6px;font-size:9.5px;line-height:10px;color:#222">*</div>
<div class="t" style="left:408.5px;top:234.70px;font-size:7.90px;color:#000;font-weight:400;transform:scaleX(0.8929);transform-origin:0 0;">Получатель (Телефон или Email)</div>
<div class="a" style="left:408.8px;top:247.8px;width:150.50px;height:12.80px;box-sizing:border-box;border:1px solid #9fbde4;background:#fff;"></div>
<div class="t" style="left:410.5px;top:249.70px;font-size:7.90px;color:#000;font-weight:400;transform:scaleX(0.8929);transform-origin:0 0;">по</div>
<div class="t" style="left:408.5px;top:263.20px;font-size:7.90px;color:#000;font-weight:400;transform:scaleX(0.8929);transform-origin:0 0;">Тип сигнала</div>
<div class="a" style="left:408.8px;top:274px;width:150.50px;height:13.70px;box-sizing:border-box;border:1px solid #a2a4a8;border-radius:0.5px;background:#fff;"></div>
<div class="t" style="left:411.9px;top:276.30px;font-size:7.90px;color:#000;font-weight:400;transform:scaleX(0.8929);transform-origin:0 0;">Дискретный</div>
<svg class="a" style="left:549.5px;top:279px" width="8" height="5"><path d="M1 1L4 4L7 1" fill="none" stroke="#444" stroke-width="0.9"/></svg>
<div class="a" style="left:408.8px;top:293.2px;width:8.40px;height:8.20px;box-sizing:border-box;border:1px solid #8a8a8a;background:#fafafa;"></div>
<svg class="a" style="left:409px;top:292.8px" width="9" height="9"><path d="M2 4.3L3.7 6.3L7 2.2" fill="none" stroke="#333" stroke-width="0.95"/></svg>
<div class="t" style="left:419.4px;top:293.10px;font-size:7.90px;color:#000;font-weight:400;transform:scaleX(0.8929);transform-origin:0 0;">Уведомить о переходе сигнала в Норма</div>
<div class="a" style="left:408.8px;top:307.5px;width:8.40px;height:8.30px;box-sizing:border-box;border:1px solid #8a8a8a;background:#fafafa;"></div>
<div class="t" style="left:419.4px;top:308.00px;font-size:7.90px;color:#000;font-weight:400;transform:scaleX(0.8929);transform-origin:0 0;">Отключить правило</div>
<div class="a" style="left:134px;top:357px;width:452.00px;height:1.00px;background:#93a9c6;"></div>
<div class="a" style="left:134px;top:358px;width:452.00px;height:1.00px;background:#e0ecfb;"></div>
<div class="a" style="left:133px;top:359px;width:453.00px;height:28.50px;background:#c1d9f8;"></div>
<div class="a" style="left:413.75px;top:365.2px;width:51.25px;height:14.50px;box-sizing:border-box;border:1px solid #eed68a;border-radius:2px;background:linear-gradient(#eef3f9,#e2eaf4 45%,#ccdaee 52%,#d8e4f3 80%,#e0eaf6);"></div><div class="t" style="left:413.75px;top:368.00px;width:51.25px;text-align:center;font-size:7.9px;transform:scaleX(0.89);transform-origin:50% 0">OK</div>
<div class="a" style="left:469px;top:365.2px;width:51.50px;height:14.50px;box-sizing:border-box;border:1px solid #9fb3ce;border-radius:2px;background:linear-gradient(#eef3f9,#e2eaf4 45%,#ccdaee 52%,#d8e4f3 80%,#e0eaf6);"></div><div class="t" style="left:469px;top:368.00px;width:51.50px;text-align:center;font-size:7.9px;transform:scaleX(0.89);transform-origin:50% 0">Отмена</div>
<div class="a" style="left:524px;top:365.2px;width:52.00px;height:14.50px;box-sizing:border-box;border:1px solid #9fb3ce;border-radius:2px;background:linear-gradient(#eef3f9,#e2eaf4 45%,#ccdaee 52%,#d8e4f3 80%,#e0eaf6);"></div><div class="t" style="left:524px;top:368.00px;width:52.00px;text-align:center;font-size:7.9px;transform:scaleX(0.89);transform-origin:50% 0">Применить</div>
<div class="a" style="left:719.3px;top:459.7px;width:80.70px;height:14.30px;background:#fff;border-radius:3px 0 0 0;"></div>
<div class="a" style="left:729.5px;top:461.3px;font-size:11px;line-height:12px;white-space:nowrap;font-weight:700;color:#45a0e4;transform:scaleX(0.95);transform-origin:0 0">clip</div>
<div class="a" style="left:744.8px;top:462.2px;width:8.6px;height:9.8px;border-radius:50%;background:radial-gradient(circle at 40% 30%,#d8e040,#f5a818 55%,#ec7a10);"></div>
<div class="a" style="left:744.8px;top:460.5px;width:8.6px;line-height:11px;text-align:center;font-size:9.5px;font-weight:700;color:#fff">2</div>
<div class="a" style="left:752.6px;top:461.3px;font-size:11px;line-height:12px;white-space:nowrap;font-weight:700;color:#45a0e4;transform:scaleX(0.86);transform-origin:0 0">net</div>
<div class="a" style="left:770.2px;top:461.3px;font-size:11px;line-height:12px;white-space:nowrap;font-weight:400;color:#a9adbb;transform:scaleX(0.88);transform-origin:0 0">.com</div>
</body></html>
